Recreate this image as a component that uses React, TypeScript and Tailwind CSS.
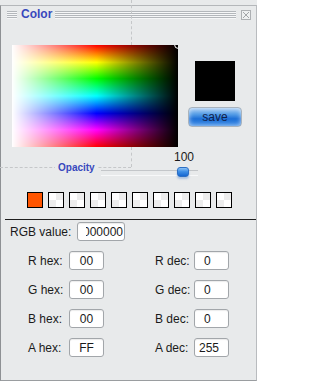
import React from "react";

const lines =
  "bg-[repeating-linear-gradient(to_bottom,#b3b7bb_0px,#b3b7bb_1px,#f6f7f8_1px,#f6f7f8_2px)]";

function Field({
  w,
  text,
  align,
  pl,
}: {
  w: string;
  text: string;
  align: "center" | "left";
  pl?: string;
}) {
  return (
    <div
      className={`${w} h-[19px] bg-white border border-[#a2a6aa] rounded-[3px] flex items-center text-[12px] leading-none text-[#1a1a1a] shadow-[inset_0_1px_1px_rgba(0,0,0,0.08)] ${
        align === "center" ? "justify-center" : "justify-start"
      } ${pl ?? ""}`}
    >
      {text}
    </div>
  );
}

function Row({
  c,
  hex,
  dec,
  decPl,
}: {
  c: string;
  hex: string;
  dec: string;
  decPl: string;
}) {
  return (
    <div className="flex items-center h-[19px] pl-[27px]">
      <div className="w-[41px] text-[12px] leading-none">{c} hex:</div>
      <Field w="w-[35px]" text={hex} align="center" />
      <div className="ml-[51px] w-[39px] text-[12px] leading-none">{c} dec:</div>
      <Field w="w-[35px]" text={dec} align="left" pl={decPl} />
    </div>
  );
}

export default function App() {
  const swatches = Array.from({ length: 9 });
  return (
    <div className="relative w-[257px] h-[381px] overflow-hidden bg-[#e8eaeb] font-['Liberation_Sans',Arial,sans-serif] text-[#1a1a1a]">
      <div className="h-[5px]" />
      <div className="h-[376px] border border-t-[#b4b7ba] border-l-[#8e9194] border-r-[#b9bcbf] border-b-[#9a9da0] flex flex-col">
        {/* title bar */}
        <div className="h-[18px] flex items-center pl-[6px] pr-[5px]">
          <div className={`w-[10px] h-[8px] ${lines}`} />
          <div className="ml-[4px] -mt-[2px] text-[12px] font-bold leading-[16px] text-[#3848bd]">
            Color
          </div>
          <div className={`ml-[3px] flex-1 h-[8px] ${lines}`} />
          <div className="ml-[5px] w-[10px] h-[10px] border border-[#adb0b3] bg-[#eef0f1] flex items-center justify-center">
            <svg width="8" height="8" viewBox="0 0 8 8">
              <path d="M1 1L7 7M7 1L1 7" stroke="#a3a6a9" strokeWidth="1" />
            </svg>
          </div>
        </div>

        {/* gradient + preview */}
        <div className="mt-[21px] flex items-start">
          <div className="ml-[11px] relative w-[166px] h-[102px] overflow-hidden bg-[linear-gradient(to_bottom,#ff0000_0%,#ffff00_17%,#00ff00_33%,#00ffff_50%,#0000ff_67%,#ff00ff_83%,#ff0000_100%)]">
            <div className="absolute inset-0 bg-[linear-gradient(to_right,#ffffff_0%,rgba(255,255,255,0)_51%,rgba(0,0,0,0)_51%,#000000_100%)]" />
            <div className="absolute right-[-5px] top-[-5px] w-[9px] h-[9px] rounded-full border border-white" />
          </div>
          <div className="ml-[10px] w-[54px] flex flex-col items-center">
            <div className="mt-[16px] w-[40px] h-[40px] bg-black" />
            <div className="mt-[6px] w-[54px] h-[20px] rounded-[4px] border border-[#a9b3bd] bg-[linear-gradient(to_bottom,#a6cbf3_0%,#559de6_35%,#1d6fd6_60%,#3a8ae6_100%)] shadow-[inset_0_0_5px_rgba(255,255,255,0.7)] flex items-center justify-center text-[12px] leading-none text-[#10204a]">
              save
            </div>
          </div>
        </div>

        {/* opacity */}
        <div className="mt-[4px] h-[12px] pl-[173px] text-[12px] leading-[12px]">100</div>
        <div className="h-[18px] flex items-start">
          <div className="relative z-10 ml-[54px] w-[43px] px-[3px] bg-[#e8eaeb] text-[10px] font-bold leading-[10px] text-[#3848bd]">
            Opacity
          </div>
          <div className="relative ml-[3px] mt-[4px] w-[97px] h-[14px]">
            <div className="mt-[3px] h-px bg-[#c3c6c9]" />
            <div className="mt-[4px] h-px bg-[#f7f8f9]" />
            <div className="absolute left-[76px] top-0 w-[12px] h-[10px] rounded-[3px] border border-[#2d6fc4] bg-[linear-gradient(to_bottom,#8cc2f5_0%,#3d8ee6_45%,#1466d0_100%)] shadow-[0_2px_2px_rgba(60,120,200,0.35)]" />
          </div>
        </div>

        {/* swatches */}
        <div className="mt-[11px] flex gap-[5px] pl-[26px]">
          <div className="w-[16px] h-[16px] border border-black bg-[#ff5500]" />
          {swatches.map((_, i) => (
            <div
              key={i}
              className="w-[16px] h-[16px] border border-black bg-[conic-gradient(#ededed_0_25%,#ffffff_0_50%,#ededed_0_75%,#ffffff_0)]"
            />
          ))}
        </div>

        <div className="mt-[11px] ml-[4px] h-px bg-[#1e1e1e]" />

        {/* RGB value */}
        <div className="mt-[2px] flex items-center h-[19px]">
          <div className="pl-[9px] w-[76px] text-[12px] leading-none">RGB value:</div>
          <div className="w-[48px] h-[19px] bg-white border border-[#a2a6aa] rounded-[3px] pl-[8px] pr-[1px] flex items-center shadow-[inset_0_1px_1px_rgba(0,0,0,0.08)]">
            <div className="w-full overflow-hidden flex justify-end whitespace-nowrap text-[12px] leading-none">
              000000
            </div>
          </div>
        </div>

        <div className="mt-[10px] flex flex-col gap-[10px]">
          <Row c="R" hex="00" dec="0" decPl="pl-[9px]" />
          <Row c="G" hex="00" dec="0" decPl="pl-[9px]" />
          <Row c="B" hex="00" dec="0" decPl="pl-[9px]" />
          <Row c="A" hex="FF" dec="255" decPl="pl-[4px]" />
        </div>
      </div>

      {/* faint dashed guides */}
      <div className="absolute left-[131px] top-0 h-[45px] border-l border-dashed border-[#c5c7c9]" />
      <div className="absolute left-[131px] top-[147px] h-[20px] border-l border-dashed border-[#c5c7c9]" />
      <div className="absolute left-0 top-[167px] w-[131px] border-t border-dashed border-[#c5c7c9]" />
    </div>
  );
}
